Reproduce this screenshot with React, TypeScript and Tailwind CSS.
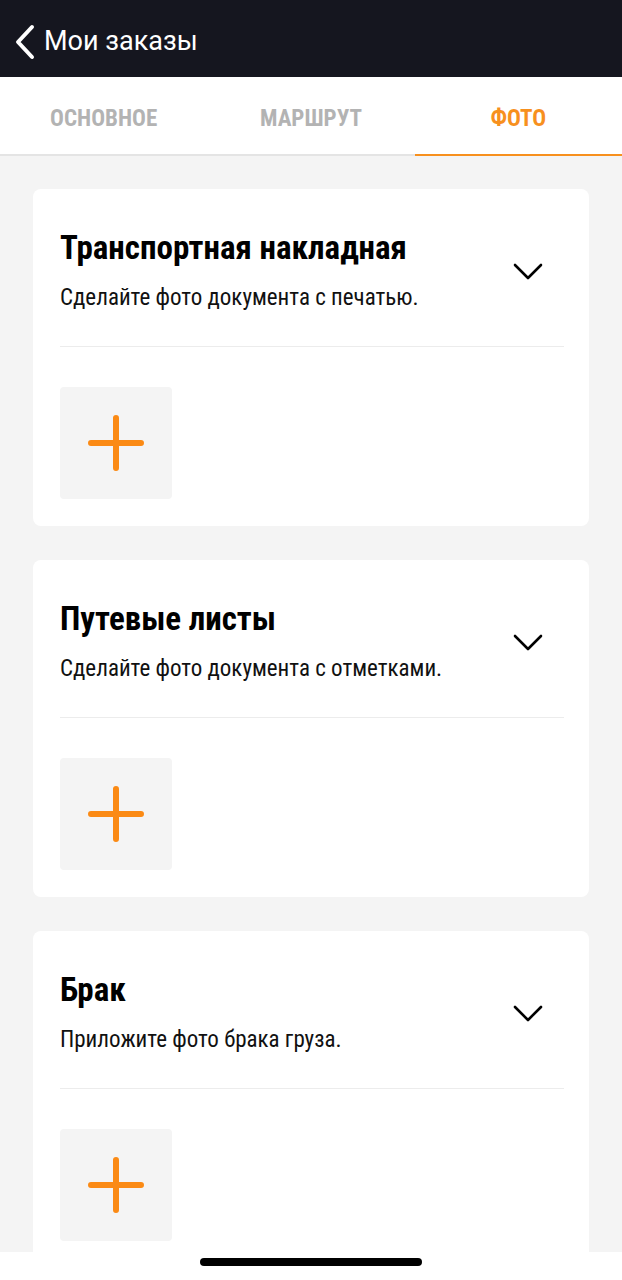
import React from 'react';

const FONT = { fontFamily: '"Roboto Condensed", Roboto, "Liberation Sans", sans-serif' };

const sections = [
  { title: 'Транспортная накладная', hint: 'Сделайте фото документа с печатью.' },
  { title: 'Путевые листы', hint: 'Сделайте фото документа с отметками.' },
  { title: 'Брак', hint: 'Приложите фото брака груза.' },
];

const tabs = ['Основное', 'Маршрут', 'Фото'];

const PhotoSection = ({ title, hint }: { title: string; hint: string }) => (
  <div className="bg-white rounded-lg pt-[39px] pb-[27px] pl-[27px] pr-[25px]">
    <div className="flex items-center justify-between">
      <div>
        <h2 className="text-[33px] leading-[40px] font-bold text-black">{title}</h2>
        <p className="mt-4 text-[23px] leading-[28px] text-[#111]">{hint}</p>
      </div>
      <svg width="30" height="18" viewBox="0 0 30 18" className="mr-[21px] mt-[4px]">
        <path d="M2 2 L15 15 L28 2" fill="none" stroke="#000" strokeWidth="2.6" strokeLinecap="round" strokeLinejoin="round" />
      </svg>
    </div>
    <div className="mt-[34px] h-px bg-[#ececec]" />
    <button className="mt-10 w-[112px] h-[112px] rounded bg-[#f4f4f4] flex items-center justify-center">
      <svg width="56" height="56" viewBox="0 0 56 56">
        <path d="M28 3 V53 M3 28 H53" stroke="#fb8a14" strokeWidth="6" strokeLinecap="round" />
      </svg>
    </button>
  </div>
);

export default function App() {
  return (
    <div className="min-h-screen bg-[#f4f4f4]" style={FONT}>
      <header className="h-[77px] bg-[#15161f] flex items-center pl-[13px] pt-[6px]">
        <svg width="24" height="36" viewBox="0 0 24 36">
          <path d="M19 3 L5 18 L19 33" fill="none" stroke="#fff" strokeWidth="4" strokeLinecap="round" strokeLinejoin="round" />
        </svg>
        <span className="ml-[7px] text-white text-[27px] leading-none font-['Roboto',sans-serif]">Мои заказы</span>
      </header>
      <nav className="h-[79px] bg-white grid grid-cols-3 border-b-2 border-[#e4e4e4]">
        {tabs.map((t, i) => (
          <div
            key={t}
            className={
              i === 2
                ? 'flex items-center justify-center pt-2 uppercase font-bold text-[23px] text-[#f7901e] border-b-2 border-[#f7901e] -mb-[2px]'
                : 'flex items-center justify-center pt-2 uppercase font-bold text-[23px] text-[#b3b3b3]'
            }
          >
            {t}
          </div>
        ))}
      </nav>
      <main className="px-[33px] pt-[33px] pb-[60px] flex flex-col gap-[34px]">
        {sections.map((s) => (
          <PhotoSection key={s.title} title={s.title} hint={s.hint} />
        ))}
      </main>
      <div className="fixed bottom-0 left-0 right-0 h-[28px] bg-white flex justify-center pt-[6px]">
        <div className="w-[222px] h-[8px] rounded-full bg-black" />
      </div>
    </div>
  );
}
